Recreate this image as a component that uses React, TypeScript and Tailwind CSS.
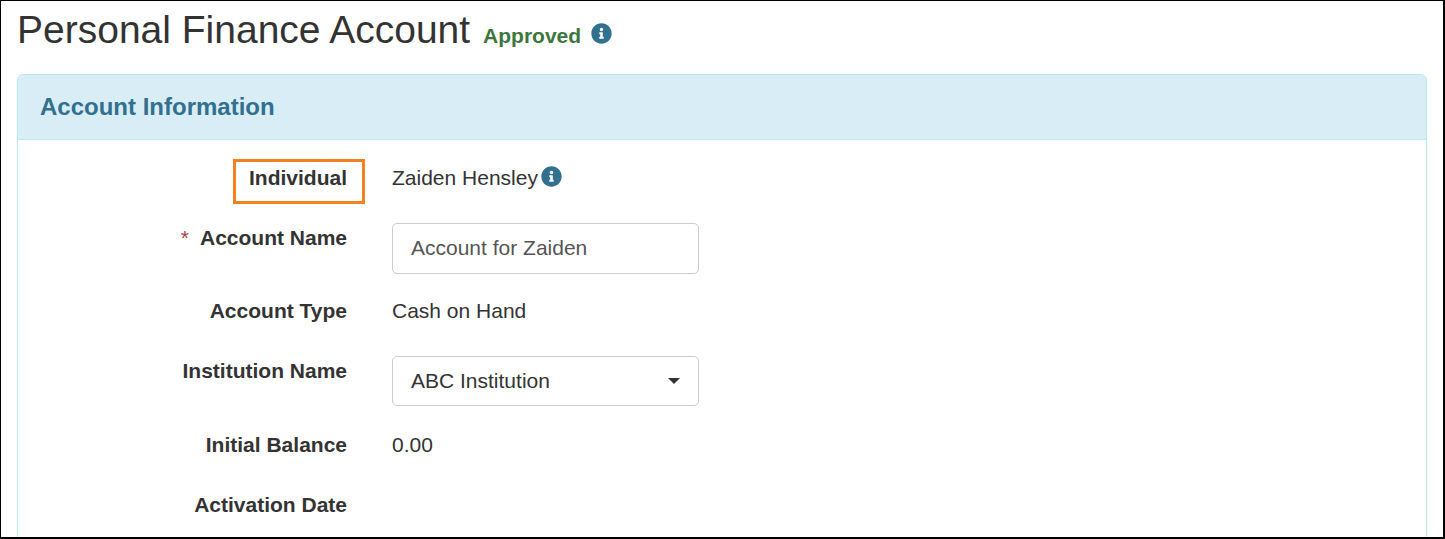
import { FaInfoCircle } from "react-icons/fa";

const labelClass =
	"w-[329px] shrink-0 text-right text-[21px] font-bold leading-[28px] text-[#333333]";
const valueClass = "text-[21px] leading-[28px] text-[#333333]";

export default function App() {
	return (
		<div
			className="box-border h-[539px] w-[1445px] overflow-hidden border border-r-2 border-b-2 border-black bg-white text-[#333333]"
			style={{ fontFamily: '"Liberation Sans", Arial, sans-serif' }}
		>
			<div className="flex h-[73px] items-start pl-4">
				<h1 className="mt-[6px] text-[39px] leading-[46px] font-normal">
					Personal Finance Account
				</h1>
				<span className="mt-[21px] ml-[13px] text-[21px] leading-[28px] font-bold text-[#3c763d]">
					Approved
				</span>
				<FaInfoCircle className="mt-[22px] ml-[10px] size-[21px] text-[#31708f]" />
			</div>

			<div className="mr-[16px] ml-4 h-[480px] rounded-t-[6px] border border-[#bce8f1]">
				<div className="flex h-[65px] items-center rounded-t-[5px] border-b border-[#bce8f1] bg-[#d9edf7] pl-[22px]">
					<h2 className="text-[24px] font-bold text-[#31708f]">
						Account Information
					</h2>
				</div>

				<div className="pt-6">
					<div className="flex gap-[45px]">
						<div className={labelClass}>
							<span className="relative">
								Individual
								<span className="absolute -top-[7px] -right-[18px] -bottom-[15px] -left-[16px] border-[3px] border-[#f58220]" />
							</span>
						</div>
						<div className={`${valueClass} flex items-center gap-[3px]`}>
							Zaiden Hensley
							<FaInfoCircle className="-mt-[3px] size-[21px] text-[#31708f]" />
						</div>
					</div>

					<div className="mt-[31px] flex gap-[45px]">
						<div className={`${labelClass} pt-px`}>
							<span className="mr-[11px] font-normal text-[#a94442]">*</span>
							Account Name
						</div>
						<div className="box-border flex h-[51px] w-[307px] items-center rounded-[5px] border border-[#cccccc] pb-[2px] pl-[18px] text-[21px] text-[#555555]">
							Account for Zaiden
						</div>
					</div>

					<div className="mt-[23px] flex gap-[45px]">
						<div className={labelClass}>Account Type</div>
						<div className={valueClass}>Cash on Hand</div>
					</div>

					<div className="mt-[31px] flex gap-[45px]">
						<div className={`${labelClass} pt-px`}>Institution Name</div>
						<div className="box-border flex h-[50px] w-[307px] items-center justify-between rounded-[5px] border border-[#cccccc] px-[18px] text-[21px] text-[#333333]">
							ABC Institution
							<svg width="12" height="6" viewBox="0 0 12 6" className="text-[#333333]">
								<path d="M0 0h12L6 6z" fill="currentColor" />
							</svg>
						</div>
					</div>

					<div className="mt-[25px] flex gap-[45px]">
						<div className={labelClass}>Initial Balance</div>
						<div className={valueClass}>0.00</div>
					</div>

					<div className="mt-[32px] flex gap-[45px]">
						<div className={labelClass}>Activation Date</div>
						<div className={valueClass} />
					</div>
				</div>
			</div>
		</div>
	);
}
